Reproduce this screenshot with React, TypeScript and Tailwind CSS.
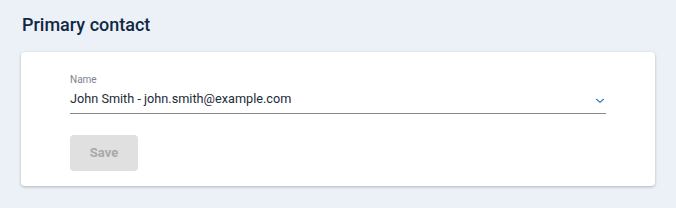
import React from "react";

export default function App() {
  return (
    <div className="min-h-[208px] w-full bg-[#ecf1f8] px-[21px] pt-[13px] pb-[20px]" style={{ fontFamily: "Roboto, 'Noto Sans', sans-serif" }}>
      <h2 className="pl-px text-[18px] leading-[24px] font-medium text-[#0f2944]">Primary contact</h2>
      <div className="mt-[15px] rounded-[4px] bg-white px-[49px] pt-[22px] pb-[15px] shadow-[0_1px_3px_rgba(0,0,0,0.25)]">
        <div className="text-[10px] leading-[12px] text-[#7b8591]">Name</div>
        <div className="mt-[3px] flex items-center justify-between border-b border-[#8a8a8a] pb-[4px]">
          <span className="text-[12.7px] leading-[20px] text-[#1d2b3a]">John Smith - john.smith@example.com</span>
          <svg width="10" height="6" viewBox="0 0 10 6" className="mr-[1px] mt-[3px]" fill="none">
            <path d="M1.5 1.3 L5 4.4 L8.5 1.3" stroke="#2a7ab8" strokeWidth="1.2" strokeLinecap="round" strokeLinejoin="round" />
          </svg>
        </div>
        <button className="mt-[21px] h-[36px] w-[68px] rounded-[4px] bg-[#e0e0e0] text-[13px] font-bold text-[#a9a9a9]">Save</button>
      </div>
    </div>
  );
}
